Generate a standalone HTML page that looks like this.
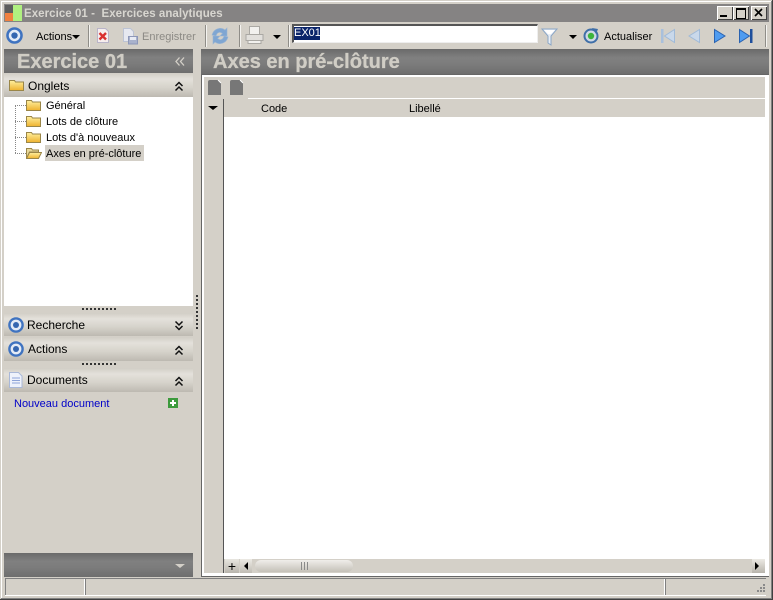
<!DOCTYPE html>
<html><head><meta charset="utf-8">
<style>
html,body{margin:0;padding:0}
body{width:773px;height:600px;overflow:hidden;position:relative;background:#d4d0c8;font-family:"Liberation Sans",sans-serif;font-size:11px;color:#000}
div,span.a,svg{position:absolute}
.t{white-space:nowrap;line-height:14px}
.sep{width:1px;height:22px;top:25px;background:#8f8d88;border-right:1px solid #f4f3f0}
.hd{left:4px;width:189px;height:24px;background:linear-gradient(#d2cec6 0,#e4e1db 25%,#d6d3cb 60%,#bdb9b1 100%)}
.dark{background:linear-gradient(#6a6a6a 0,#808080 35%,#7c7c7c 60%,#6e6e6e 100%)}
.big{font-weight:bold;color:#d0cdc5;font-size:20px;line-height:24px;white-space:nowrap;-webkit-text-stroke:.3px #d0cdc5}
.dots{height:2px;background:repeating-linear-gradient(90deg,#333 0 2px,transparent 2px 4px)}
</style></head><body>
<svg width="0" height="0" style="position:absolute"><defs>
<linearGradient id="fg" x1="0" y1="0" x2="0" y2="1"><stop offset="0" stop-color="#fff0a0"/><stop offset="1" stop-color="#eeb22e"/></linearGradient>
<g id="folder"><path d="M.5 2.500h5l1 1.500h8v8.500H.5z" fill="url(#fg)" stroke="#9a8648"/></g>
<g id="target"><circle cx="8" cy="8" r="6.600" fill="#e4ebf6" stroke="#3f73c0" stroke-width="2.400"/><circle cx="8" cy="8" r="3" fill="#3566b0"/></g>
<g id="up"><path d="M1.500 5 5 1.500 8.500 5M1.500 9.500 5 6 8.500 9.500" fill="none" stroke="#111" stroke-width="1.500"/></g>
<g id="down"><path d="M1.500 1.500 5 5 8.500 1.500M1.500 6 5 9.500 8.500 6" fill="none" stroke="#111" stroke-width="1.500"/></g>
</defs></svg>

<!-- window frame -->
<div style="left:0;top:0;width:773px;height:1px;background:#d4d0c8"></div>
<div style="left:1px;top:1px;width:771px;height:1px;background:#fff"></div>
<div style="left:1px;top:1px;width:1px;height:597px;background:#fff"></div>
<div style="left:772px;top:0;width:1px;height:600px;background:#404040"></div>
<div style="left:771px;top:1px;width:1px;height:598px;background:#808080"></div>
<div style="left:0;top:599px;width:773px;height:1px;background:#404040"></div>
<div style="left:1px;top:598px;width:771px;height:1px;background:#808080"></div>

<!-- title bar -->
<div style="left:4px;top:4px;width:765px;height:18px;background:#858383"></div>
<div style="left:5px;top:5px;width:8px;height:8px;background:#5c5c5c"></div>
<div style="left:5px;top:13px;width:8px;height:8px;background:#f08040"></div>
<div style="left:13px;top:5px;width:9px;height:16px;background:#b0f080"></div>
<div class="t" style="left:24px;top:7px;font-weight:bold;font-size:11.500px;color:#d8d6d0;letter-spacing:.05px;white-space:pre">Exercice 01 -  Exercices analytiques</div>
<div style="left:717px;top:6px;width:16px;height:14px;background:#d4d0c8;box-shadow:inset 1px 1px #fff,inset -1px -1px #404040"></div>
<div style="left:720px;top:15px;width:7px;height:2px;background:#000"></div>
<div style="left:733px;top:6px;width:16px;height:14px;background:#d4d0c8;box-shadow:inset 1px 1px #fff,inset -1px -1px #404040"></div>
<div style="left:736px;top:8px;width:8px;height:8px;border:1px solid #000;border-top-width:2px"></div>
<div style="left:751px;top:6px;width:16px;height:14px;background:#d4d0c8;box-shadow:inset 1px 1px #fff,inset -1px -1px #404040"></div>
<svg style="left:754px;top:8px" width="10" height="10"><path d="M1 1l7 7M8 1l-7 7" stroke="#000" stroke-width="1.600"/></svg>

<!-- toolbar -->
<svg style="left:6px;top:27px" width="17" height="17" viewBox="0 0 16 16"><use href="#target"/></svg>
<div class="t" style="left:36px;top:30px">Actions</div>
<div style="left:72px;top:35px;width:0;height:0;border:4px solid transparent;border-top:4px solid #000;border-bottom:0"></div>
<div class="sep" style="left:88px"></div>
<svg style="left:96px;top:28px" width="14" height="16"><path d="M1.500.5h8l3 3v11h-11z" fill="#f6eeee" stroke="#b9b4c8"/><path d="M3.500 5l6.500 6.500M10 5l-6.500 6.500" stroke="#d93030" stroke-width="2.400"/></svg>
<svg style="left:122px;top:28px" width="17" height="17"><path d="M1.500.5h7l3 3v10h-10z" fill="#e6e8f0" stroke="#bcc3d4"/><rect x="6.500" y="8.500" width="9" height="7.500" fill="#a9b2cc" stroke="#8d97b8"/><rect x="8" y="9" width="6" height="3" fill="#e8ebf4"/></svg>
<div class="t" style="left:142px;top:30px;color:#8c8a85">Enregistrer</div>
<div class="sep" style="left:205px"></div>
<svg style="left:211px;top:26px" width="18" height="20"><path d="M1 9C3 2 10 1 14 4l2-2v8h-7l2.500-2.500C9 5.500 6 6 5 10z" fill="#7fa6d2" stroke="#9ab4d2" stroke-width=".6"/><path d="M17 11c-2 7-9 8-13 5l-2 2v-8h7l-2.500 2.500c2.500 2 5.500 1.500 6.500-2.500z" fill="#7fa6d2" stroke="#9ab4d2" stroke-width=".6"/></svg>
<div class="sep" style="left:239px"></div>
<svg style="left:245px;top:26px" width="19" height="19"><rect x="4.500" y=".5" width="10" height="8" fill="#f2f1ee" stroke="#aaa8a3"/><path d="M1 8.500h17v6H1z" fill="#e2e0dc" stroke="#aaa8a3"/><rect x="3" y="14.500" width="13" height="3" fill="#f2f1ee" stroke="#aaa8a3"/></svg>
<div style="left:273px;top:35px;width:0;height:0;border:4px solid transparent;border-top:4px solid #000;border-bottom:0"></div>
<div class="sep" style="left:288px"></div>
<div style="left:292px;top:24px;width:243px;height:16px;background:#fff;border-top:2px solid #555;border-left:2px solid #555;border-right:1px solid #eee;border-bottom:1px solid #eee"></div>
<div class="t" style="left:294px;top:27px;height:13px;width:26px;background:#0a246a;color:#fff;font-size:11px;line-height:13px">EX01</div>
<svg style="left:541px;top:28px" width="18" height="18"><path d="M1 1h15l-6 7v9l-3-2V8z" fill="#e8eef6" stroke="#8aa6c6"/><path d="M3 2h11l-4 4H7z" fill="#fff"/></svg>
<div style="left:569px;top:35px;width:0;height:0;border:4px solid transparent;border-top:4px solid #000;border-bottom:0"></div>
<svg style="left:583px;top:27px" width="17" height="17"><circle cx="8" cy="9" r="6.500" fill="#cfd9e6" stroke="#3f6fa8" stroke-width="2"/><circle cx="8" cy="9" r="3.200" fill="#3cb43c"/><path d="M9 1l6 1-2 5z" fill="#3f6fa8"/></svg>
<div class="t" style="left:604px;top:30px">Actualiser</div>
<svg style="left:660px;top:28px" width="16" height="16"><rect x="1" y="1" width="2.500" height="14" fill="#a9c0dc"/><path d="M14.500 1.500v13L4.500 8z" fill="#c9d8ea" stroke="#a0bad8"/></svg>
<svg style="left:687px;top:28px" width="14" height="16"><path d="M12.500 1.500v13L2 8z" fill="#c9d8ea" stroke="#a0bad8"/></svg>
<svg style="left:713px;top:28px" width="14" height="16"><path d="M1.500 1.500v13L12 8z" fill="#4f9cf0" stroke="#2a62b0"/></svg>
<svg style="left:738px;top:28px" width="16" height="16"><path d="M1.500 1.500v13L11.500 8z" fill="#4f9cf0" stroke="#2a62b0"/><rect x="12" y="1" width="2.500" height="14" fill="#1f4f9c"/></svg>
<div class="sep" style="left:765px"></div>

<!-- left header -->
<div class="dark" style="left:4px;top:49px;width:189px;height:24px"></div>
<div class="big" style="left:17px;top:50px">Exercice 01</div>
<svg style="left:175px;top:57px" width="10" height="9"><path d="M4.500.5 1 4.500l3.500 4M9 .5 5.500 4.500 9 8.500" fill="none" stroke="#d4d0c8" stroke-width="1.300"/></svg>

<!-- Onglets -->
<div class="hd" style="top:73px"></div>
<svg style="left:9px;top:78px" width="15" height="14"><use href="#folder"/></svg>
<div class="t" style="left:28px;top:79px;font-size:12px">Onglets</div>
<svg style="left:174px;top:81px" width="10" height="11"><use href="#up"/></svg>

<!-- tree -->
<div style="left:4px;top:97px;width:189px;height:209px;background:#fff"></div>
<div style="left:15px;top:105px;width:0;height:48px;border-left:1px dotted #888"></div>
<div style="left:15px;top:105px;width:11px;border-top:1px dotted #888"></div>
<div style="left:15px;top:121px;width:11px;border-top:1px dotted #888"></div>
<div style="left:15px;top:137px;width:11px;border-top:1px dotted #888"></div>
<div style="left:15px;top:153px;width:11px;border-top:1px dotted #888"></div>
<svg style="left:26px;top:98px" width="15" height="14"><use href="#folder"/></svg>
<svg style="left:26px;top:114px" width="15" height="14"><use href="#folder"/></svg>
<svg style="left:26px;top:130px" width="15" height="14"><use href="#folder"/></svg>
<svg style="left:26px;top:146px" width="16" height="14"><path d="M.5 2.500h5l1 1.500h6v2H3.500l-3 6.500z" fill="#e8d89a" stroke="#9a8648"/><path d="M3.500 6.500h12l-3 6H.5z" fill="url(#fg)" stroke="#9a8648"/></svg>
<div class="t" style="left:46px;top:99px">Général</div>
<div class="t" style="left:46px;top:115px">Lots de clôture</div>
<div class="t" style="left:46px;top:131px">Lots d'à nouveaux</div>
<div style="left:45px;top:145px;width:99px;height:16px;background:#d4d0c8"></div>
<div class="t" style="left:46px;top:147px">Axes en pré-clôture</div>

<div class="dots" style="left:82px;top:308px;width:35px"></div>
<div class="hd" style="top:313px;height:23px"></div>
<svg style="left:8px;top:317px" width="16" height="16"><use href="#target"/></svg>
<div class="t" style="left:27px;top:318px;font-size:12px">Recherche</div>
<svg style="left:174px;top:320px" width="10" height="11"><use href="#down"/></svg>
<div class="hd" style="top:337px"></div>
<svg style="left:8px;top:341px" width="16" height="16"><use href="#target"/></svg>
<div class="t" style="left:28px;top:342px;font-size:12px">Actions</div>
<svg style="left:174px;top:345px" width="10" height="11"><use href="#up"/></svg>
<div class="dots" style="left:82px;top:363px;width:35px"></div>
<div class="hd" style="top:368px"></div>
<svg style="left:9px;top:372px" width="14" height="16"><path d="M.5.5h9l3.500 3.500v11.500H.5z" fill="#eef2fb" stroke="#a9b8d8"/><path d="M3 6h8M3 8.500h8M3 11h8" stroke="#8ea4d8"/></svg>
<div class="t" style="left:27px;top:373px;font-size:12px">Documents</div>
<svg style="left:174px;top:376px" width="10" height="11"><use href="#up"/></svg>
<div class="t" style="left:14px;top:397px;color:#0000c8">Nouveau document</div>
<div style="left:168px;top:398px;width:10px;height:10px;background:#3c9a3c"></div>
<div style="left:172px;top:400px;width:2px;height:6px;background:#fff"></div>
<div style="left:170px;top:402px;width:6px;height:2px;background:#fff"></div>

<div class="dark" style="left:4px;top:553px;width:189px;height:24px"></div>
<div style="left:175px;top:564px;width:0;height:0;border:5px solid transparent;border-top:4px solid #d4d0c8;border-bottom:0"></div>

<!-- splitter -->
<div style="left:196px;top:295px;width:2px;height:36px;background:repeating-linear-gradient(#333 0 2px,transparent 2px 4px)"></div>

<!-- right panel -->
<div class="dark" style="left:201px;top:49px;width:568px;height:25px"></div>
<div class="big" style="left:213px;top:50px">Axes en pré-clôture</div>
<div style="left:201px;top:74px;width:568px;height:503px;background:#666"></div>
<div style="left:202px;top:75px;width:567px;height:501px;background:#fff"></div>
<div style="left:204px;top:77px;width:561px;height:21px;background:#d4d0c8"></div>
<svg style="left:206px;top:79px" width="17" height="17"><path d="M2 3q0-2 2-2h8l3 3v12H2z" fill="#777"/><path d="M12 1l3 3" stroke="#fff"/></svg>
<svg style="left:228px;top:79px" width="17" height="17"><path d="M2 3q0-2 2-2h8l3 3v12H2z" fill="#777"/><path d="M12 1l3 3" stroke="#fff"/></svg>
<div style="left:204px;top:98px;width:44px;height:1px;background:#d4d0c8"></div>
<div style="left:204px;top:99px;width:19px;height:474px;background:#d4d0c8"></div>
<div style="left:223px;top:99px;width:1px;height:474px;background:#555"></div>
<div style="left:224px;top:99px;width:541px;height:18px;background:#d4d0c8"></div>
<div style="left:208px;top:106px;width:0;height:0;border:4px solid transparent;border-top:4px solid #000;border-bottom:0;border-left-width:5px;border-right-width:5px"></div>
<div class="t" style="left:261px;top:102px">Code</div>
<div class="t" style="left:409px;top:102px">Libellé</div>

<!-- scrollbar -->
<div style="left:224px;top:559px;width:541px;height:14px;background:#d4d0c8"></div>
<div style="left:225px;top:559px;width:14px;height:14px;background:linear-gradient(#e8e6e0,#b8b4ac)"></div>
<div class="t" style="left:225px;top:559px;width:14px;text-align:center;font-size:14px;line-height:15px">+</div>
<div style="left:240px;top:559px;width:12px;height:14px;background:linear-gradient(#eceae4,#c0bcb4)"></div>
<div style="left:244px;top:562px;width:0;height:0;border:4px solid transparent;border-right:4px solid #000;border-left:0"></div>
<div style="left:255px;top:560px;width:98px;height:12px;border-radius:6px;background:linear-gradient(#f0eeea,#c4c0b8)"></div>
<div style="left:301px;top:562px;width:1px;height:8px;background:#8a8a8a;box-shadow:3px 0 #8a8a8a,6px 0 #8a8a8a"></div>
<div style="left:752px;top:559px;width:13px;height:14px;background:linear-gradient(#eceae4,#b8b4ac)"></div>
<div style="left:755px;top:562px;width:0;height:0;border:4px solid transparent;border-left:4px solid #000;border-right:0"></div>

<!-- status bar -->
<div style="left:5px;top:578px;width:761px;height:1px;background:#808080"></div>
<div style="left:5px;top:595px;width:761px;height:1px;background:#fff"></div>
<div style="left:5px;top:578px;width:1px;height:17px;background:#808080"></div>
<div style="left:84px;top:579px;width:1px;height:16px;background:#fff"></div>
<div style="left:85px;top:578px;width:1px;height:17px;background:#808080"></div>
<div style="left:664px;top:579px;width:1px;height:16px;background:#fff"></div>
<div style="left:665px;top:578px;width:1px;height:17px;background:#808080"></div>
<svg style="left:754px;top:583px" width="14" height="12"><g fill="#8a8a8a"><rect x="9" y="1" width="2" height="2"/><rect x="6" y="4" width="2" height="2"/><rect x="9" y="4" width="2" height="2"/><rect x="3" y="7" width="2" height="2"/><rect x="6" y="7" width="2" height="2"/><rect x="9" y="7" width="2" height="2"/></g></svg>
</body></html>
